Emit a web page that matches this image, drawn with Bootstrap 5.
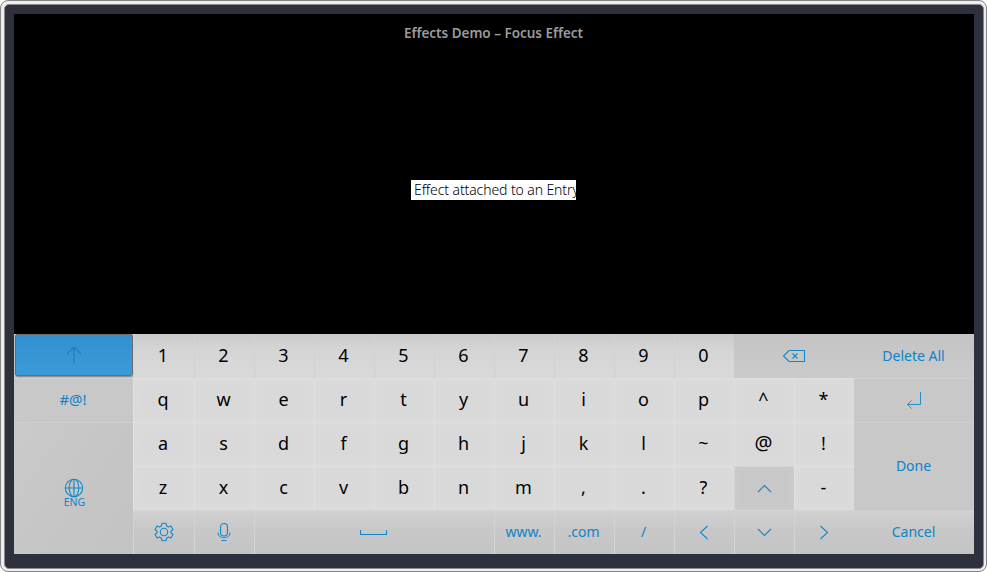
<!DOCTYPE html>
<html lang="en">
<head>
<meta charset="utf-8">
<meta name="viewport" content="width=device-width, initial-scale=1">
<title>Effects Demo - Focus Effect</title>
<link href="https://cdn.jsdelivr.net/npm/bootstrap@5.3.0/dist/css/bootstrap.min.css" rel="stylesheet">
<style>
body{background:#fff;font-family:"Noto Sans","Open Sans",sans-serif;width:987px;height:572px}
.tv{width:987px;height:572px;border-radius:8px;border:1px solid #858487;background:#efedef;padding:3px 2px 2px 3px}
.tv-edge{border:1px solid #8b898c;border-radius:5px;background:#2e313b;padding:9px 9px 14px 9px}
.tv-screen{width:960px;height:540px;background:#000}
.stage{height:320px}
.demo-title{font-size:13.5px;font-weight:600;line-height:20px;color:#9b9b9b;padding:9px 1px 0 0;letter-spacing:-.02px}
.entry{width:165px;height:20px;margin:137px 0 0 397px;padding-left:3px;background:#fff;color:#000;font-weight:300;font-size:14px;line-height:20px;letter-spacing:-.1px}
.keys{display:grid;grid-template-columns:119px 61px repeat(11,60px) 120px;grid-template-rows:repeat(5,44px);height:220px;background:#dadada}
.key{background:#d9d9d9;box-shadow:inset 1px 1px 0 #e0e0e0,inset 0 0 10px #dedede;color:#000;font-size:18px;line-height:1;padding-bottom:3px;padding-right:1px}
.key.num{background:linear-gradient(#cbcbcb,#d5d5d5 35%,#d9d9d9);box-shadow:inset 1px 0 0 #d2d2d2}
.key.at{font-size:20px}
.key.fn{background:#c8c8c8;color:#0d83c8;font-size:14px;padding-bottom:1px;box-shadow:inset 1px 1px 0 #d2d2d2,inset 0 0 9px #cfcfcf}
.key.low{background:linear-gradient(#d1d1d1,#c8c8c8 45%,#c4c4c4);box-shadow:inset 1px 1px 0 #d4d4d4}
.key.side{box-shadow:inset 0 1px 0 #cfcfcf}
.key.flat{background:linear-gradient(#c4c4c4,#cacaca);box-shadow:none}
.key.tall{grid-row:span 3;background:linear-gradient(125deg,#cacaca,#c5c5c5 60%,#c3c3c3)}
.key.done{grid-row:span 2}
.key.space{grid-column:span 4}
.key.bksp{grid-column:span 2}
.key.shift{background:linear-gradient(#3190d1,#3d9ad7);border:1px solid #6c6c6c;border-radius:2px;margin:0 0 2px 1px;box-shadow:0 1px 2px #777}
.key.pic{padding-bottom:0;padding-right:0}
.key.syms{font-size:15px}
.eng{font-size:10.5px;line-height:9px;padding-left:2px}
svg{fill:none;stroke:#1487cb;stroke-width:1.1;display:block;flex:none}
</style>
<script src="https://cdn.jsdelivr.net/npm/bootstrap@5.3.0/dist/js/bootstrap.bundle.min.js"></script>
</head>
<body class="m-0 overflow-hidden">
<div class="tv">
<div class="tv-edge">
<main class="tv-screen d-flex flex-column overflow-hidden">
<section class="stage">
<h1 class="demo-title text-center m-0">Effects Demo – Focus Effect</h1>
<div class="entry overflow-hidden text-nowrap">Effect attached to an Entry</div>
</section>
<section class="keys" id="keys"></section>
</main>
</div>
</div>
<script>
const icon = (w, h, body) => `<svg width="${w}" height="${h}" viewBox="0 0 ${w} ${h}">${body}</svg>`;
const art = {
  shift: icon(16, 18, '<path stroke="#1a7fc4" d="M8 17.5V1M1 8l7-7 7 7"/>'),
  bksp: icon(24, 14, '<path d="M7 1.5h15.500v11H7L1.500 7z"/><path d="M10.500 4.500l5 5m0-5l-5 5"/>'),
  enter: icon(16, 18, '<path stroke-width=".9" d="M14.500 1v12.500H1.500M5.500 9.500l-4 4 4 4"/>'),
  globe: icon(20, 20, '<circle cx="10" cy="10" r="8.700"/><ellipse cx="10" cy="10" rx="4.800" ry="8.700"/><path d="M10 1.300v17.400M1.300 10h17.400"/>'),
  gear: icon(20, 20, '<circle cx="10" cy="10" r="3.700"/><path stroke-linejoin="round" d="M8 1.200h4l.5 2.600 2 1.200 2.500-.9 2 3.400-2 1.700v1.600l2 1.700-2 3.400-2.500-.9-2 1.200-.5 2.600H8l-.5-2.600-2-1.200-2.500.9-2-3.400 2-1.700V9.200L1 7.500l2-3.400 2.500.9 2-1.200z"/>'),
  mic: icon(14, 20, '<rect x="3.500" y="1.500" width="7" height="12.500" rx="3.500"/><path d="M1 10.500c0 7 12 7 12 0M4.500 18.500h5"/>'),
  space: icon(28, 7, '<path d="M.5 1v4.500h26V1"/>'),
  left: icon(10, 15, '<path d="M8.500 1L1.500 7.500l7 6.500"/>'),
  right: icon(10, 15, '<path d="M1.500 1l7 6.500-7 6.500"/>'),
  up: icon(15, 9, '<path d="M1 8l6.500-6.500L14 8"/>'),
  down: icon(15, 9, '<path d="M1 1l6.500 6.500L14 1"/>')
};
const grid = document.getElementById('keys');
function key(content, kind = '') {
  const k = document.createElement('div');
  k.className = 'key d-flex flex-column align-items-center justify-content-center ' + kind;
  k.innerHTML = content;
  grid.append(k);
}
key(art.shift, 'fn pic shift');
[...'1234567890'].forEach(c => key(c, 'num'));
key(art.bksp, 'fn pic flat bksp');
key('Delete All', 'fn flat');
key('#@!', 'fn side syms');
[...'qwertyuiop^*'].forEach(c => key(c));
key(art.enter, 'fn pic side');
key(art.globe + '<span class="eng">ENG</span>', 'fn pic side tall pt-2');
[...'asdfghjkl~@!'].forEach(c => key(c, c === '@' ? 'at' : ''));
key('Done', 'fn side done');
[...'zxcvbnm,.?'].forEach(c => key(c));
key(art.up, 'fn pic');
key('-');
key(art.gear, 'fn pic low');
key(art.mic, 'fn pic low');
key(art.space, 'fn pic low space');
['www.', '.com', '/'].forEach(c => key(c, 'fn low'));
[art.left, art.down, art.right].forEach(c => key(c, 'fn pic low'));
key('Cancel', 'fn low side');
</script>
</body>
</html>
